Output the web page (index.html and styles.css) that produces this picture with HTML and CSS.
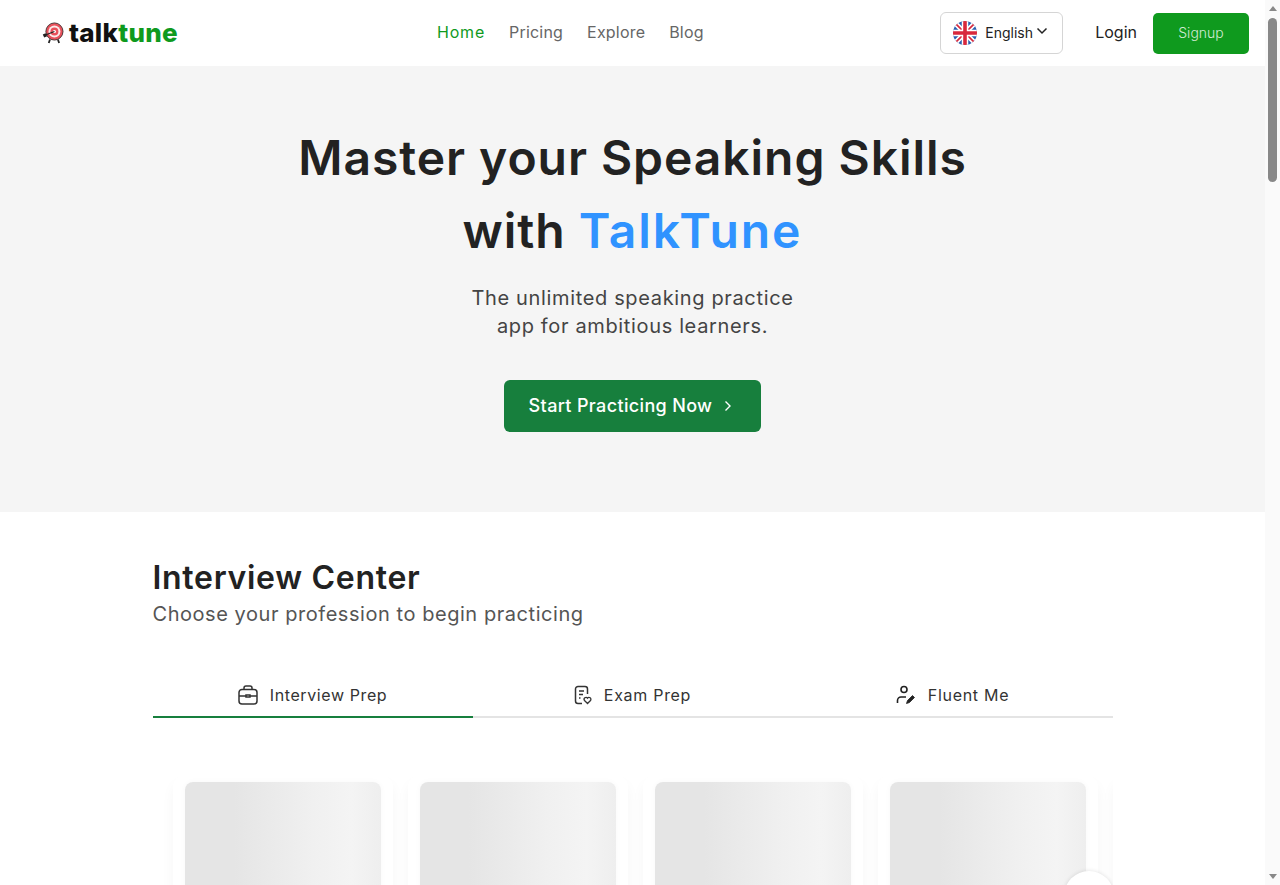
FILE: index.html
```html
<!DOCTYPE html>
<html lang="en">
  <head>
    <meta charset="UTF-8" />
    <meta name="viewport" content="width=device-width, initial-scale=1.0" />
    <title>TalkTune</title>
    <link rel="stylesheet" href="styles.css">
  </head>
  <body>
    <div class="page">
      <div class="content">
        <header class="navbar">
          <a class="logo" href="#">
            <svg class="logo-icon" width="22" height="22" viewBox="0 0 22 22">
              <path d="M8 17.5 L6.8 21 M16 17.5 L17.2 21" stroke="#222" stroke-width="1.8"/>
              <circle cx="12.5" cy="9.5" r="8.6" fill="#e8505b" stroke="#3a2a2a" stroke-width="0.9"/>
              <circle cx="12.5" cy="9.5" r="6" fill="#fbeaea"/>
              <circle cx="12.5" cy="9.5" r="4" fill="#e8505b"/>
              <circle cx="12.5" cy="9.5" r="1.6" fill="#fff"/>
              <path d="M12.5 9.5 L3.5 13" stroke="#222" stroke-width="1.3"/>
              <path d="M0.8 12.6 L3.6 11.2 L5.2 14.2 L2.2 15.4 Z" fill="#222"/>
            </svg>
            <span class="logo-text">talk<span class="logo-green">tune</span></span>
          </a>
          <nav class="nav-links">
            <a class="active" href="#">Home</a>
            <a href="#">Pricing</a>
            <a href="#">Explore</a>
            <a href="#">Blog</a>
          </nav>
          <button class="lang-select">
            <svg class="flag" width="24" height="24" viewBox="0 0 24 24">
              <defs><clipPath id="flagClip"><circle cx="12" cy="12" r="12"/></clipPath></defs>
              <g clip-path="url(#flagClip)">
                <rect width="24" height="24" fill="#2a5fb0"/>
                <path d="M0 0 L24 24 M24 0 L0 24" stroke="#fff" stroke-width="5"/>
                <path d="M0 0 L24 24 M24 0 L0 24" stroke="#d8283c" stroke-width="1.6"/>
                <path d="M12 0 V24 M0 12 H24" stroke="#fff" stroke-width="6.5"/>
                <path d="M12 0 V24 M0 12 H24" stroke="#d8283c" stroke-width="3.6"/>
              </g>
            </svg>
            <span>English</span>
            <svg class="chevron" width="12" height="8" viewBox="0 0 12 8">
              <path d="M1.5 1.5 L6 6 L10.5 1.5" fill="none" stroke="#222" stroke-width="1.5"/>
            </svg>
          </button>
          <a class="login" href="#">Login</a>
          <button class="signup">Signup</button>
        </header>

        <section class="hero">
          <h1>Master your Speaking Skills<br />with <span class="blue">TalkTune</span></h1>
          <p>The unlimited speaking practice<br />app for ambitious learners.</p>
          <button class="cta">
            Start Practicing Now
            <svg width="8" height="12" viewBox="0 0 8 12">
              <path d="M1.5 1.5 L6 6 L1.5 10.5" fill="none" stroke="#fff" stroke-width="1.4"/>
            </svg>
          </button>
        </section>

        <section class="center">
          <h2>Interview Center</h2>
          <p class="sub">Choose your profession to begin practicing</p>

          <div class="tabs">
            <div class="tab selected">
              <svg width="20" height="20" viewBox="0 0 20 20" fill="none" stroke="#333" stroke-width="1.5">
                <rect x="1" y="4.5" width="18" height="14.5" rx="3"/>
                <path d="M6 4.5 V3 A2 2 0 0 1 8 1 H12 A2 2 0 0 1 14 3 V4.5"/>
                <path d="M1 11 H8 M12 11 H19"/>
                <path d="M8 10 H12 V12 H8 Z"/>
              </svg>
              <span>Interview Prep</span>
            </div>
            <div class="tab">
              <svg width="18" height="20" viewBox="0 0 18 20" fill="none" stroke="#333" stroke-width="1.5">
                <path d="M8 18.5 H4 A2.5 2.5 0 0 1 1.5 16 V4 A2.5 2.5 0 0 1 4 1.5 H11 A2.5 2.5 0 0 1 13.5 4 V9"/>
                <path d="M5 6 H10 M5 9.5 H9 M5 13 H6.5"/>
                <path d="M13.5 18.5 L10.5 15.5 A1.8 1.8 0 0 1 13.5 13.2 A1.8 1.8 0 0 1 16.5 15.5 Z" stroke-width="1.3"/>
              </svg>
              <span>Exam Prep</span>
            </div>
            <div class="tab">
              <svg width="20" height="20" viewBox="0 0 20 20" fill="none" stroke="#222" stroke-width="1.6">
                <circle cx="8" cy="4.5" r="3"/>
                <path d="M1.5 18 V15.5 A3.5 3.5 0 0 1 5 12 H10"/>
                <path d="M10.5 18.5 L11.5 15.5 L16.5 10.5 L18.5 12.5 L13.5 17.5 Z" fill="#222" stroke-width="0.8"/>
              </svg>
              <span>Fluent Me</span>
            </div>
          </div>

          <div class="carousel">
            <div class="card"><div class="thumb"></div></div>
            <div class="card"><div class="thumb"></div></div>
            <div class="card"><div class="thumb"></div></div>
            <div class="card"><div class="thumb"></div></div>
            <div class="card"><div class="thumb"></div></div>
            <div class="next-btn"></div>
          </div>
        </section>
      </div>

      <!-- scrollbar -->
      <div class="scrollbar">
        <span class="arrow-up"></span>
        <span class="thumb-bar"></span>
        <span class="arrow-down"></span>
      </div>
    </div>
  </body>
</html>
```

FILE: styles.css
```css
* {
  margin: 0;
  padding: 0;
  box-sizing: border-box;
}

body,
html {
  height: 100%;
  overflow: hidden;
  font-family: Inter, "Open Sans", Arial, sans-serif;
  color: #222;
  background: #fff;
}

a {
  text-decoration: none;
  color: inherit;
}

button {
  font-family: inherit;
  cursor: pointer;
}

.page {
  display: flex;
  height: 885px;
}

.content {
  flex: 1;
  min-width: 0;
  overflow: hidden;
}

/* navbar */
.navbar {
  display: flex;
  align-items: center;
  height: 66px;
  padding: 0 16px 0 42px;
  background: #fff;
}

.logo {
  display: flex;
  align-items: center;
  gap: 5px;
  width: 136px;
}

.logo-text {
  font-size: 26px;
  font-weight: 800;
  line-height: 30px;
  letter-spacing: 0.3px;
  white-space: nowrap;
  color: #111;
}

.logo-green {
  color: #0f9a1e;
}

.nav-links {
  display: flex;
  gap: 24px;
  margin-left: 259px;
  padding-bottom: 2px;
  font-size: 16px;
  letter-spacing: 0.2px;
  color: #666;
}

.nav-links .active {
  letter-spacing: 0.8px;
  color: #0f9a1e;
}

.lang-select {
  display: flex;
  align-items: center;
  gap: 8px;
  width: 123px;
  height: 42px;
  margin-left: auto;
  padding: 0 12px;
  background: #fff;
  border: 1px solid #d5d5d5;
  border-radius: 6px;
  font-size: 14px;
  color: #222;
}

.lang-select span {
  padding-bottom: 1px;
}

.chevron {
  margin-left: -5px;
  margin-top: -4px;
}

.login {
  margin-left: 32px;
  padding-bottom: 2px;
  font-size: 16px;
  color: #222;
}

.signup {
  width: 96px;
  height: 41px;
  margin-left: 16px;
  padding-bottom: 1px;
  background: #0f9a1e;
  border: none;
  border-radius: 5px;
  color: #cfe9d2;
  font-size: 14px;
  font-weight: 300;
}

/* hero */
.hero {
  display: flex;
  flex-direction: column;
  align-items: center;
  height: 446px;
  padding-top: 55px;
  background: #f5f5f5;
  text-align: center;
}

.hero h1 {
  font-size: 48px;
  font-weight: 600;
  line-height: 73px;
  letter-spacing: 0.95px;
  color: #222;
}

.blue {
  letter-spacing: 1.95px;
  color: #3093ff;
}

.hero p {
  margin-top: 17px;
  font-size: 20px;
  line-height: 28px;
  letter-spacing: 0.65px;
  color: #444;
}

.cta {
  display: flex;
  align-items: center;
  justify-content: center;
  gap: 12px;
  width: 257px;
  height: 52px;
  margin-top: 40px;
  padding: 0 4px 1px 0;
  background: #177f3d;
  border: none;
  border-radius: 6px;
  color: #fff;
  font-size: 18px;
  font-weight: 500;
  letter-spacing: 0.35px;
}

/* interview center */
.center {
  width: 960px;
  margin: 0 auto;
  padding-top: 46px;
}

.center h2 {
  font-size: 32px;
  font-weight: 600;
  line-height: 39px;
  letter-spacing: 0.7px;
  color: #222;
}

.sub {
  font-size: 20px;
  line-height: 34px;
  letter-spacing: 0.55px;
  color: #555;
}

.tabs {
  display: grid;
  grid-template-columns: repeat(3, 1fr);
  height: 42px;
  margin-top: 45px;
  border-bottom: 2px solid #e4e4e4;
}

.tab {
  display: flex;
  align-items: center;
  justify-content: center;
  gap: 12px;
  height: 42px;
  padding-bottom: 4px;
  font-size: 16px;
  letter-spacing: 0.7px;
  color: #333;
}

.tab.selected {
  padding-bottom: 2px;
  border-bottom: 2px solid #177f3d;
  letter-spacing: 0.6px;
}

.carousel {
  position: relative;
  display: flex;
  gap: 15px;
  height: 200px;
  margin-top: 57px;
  padding-left: 20px;
  overflow: hidden;
}

.card {
  flex: none;
  width: 220px;
  height: 300px;
  padding: 7px 12px;
  background: #fff;
  border-radius: 12px;
  box-shadow: 0 8px 14px rgba(0, 0, 0, 0.04);
}

.thumb {
  height: 100%;
  background: linear-gradient(90deg, #e5e5e5 25%, #f0f0f0 65%, #f4f4f4 85%, #eeeeee 100%);
  border-radius: 8px;
  box-shadow: 0 0 6px rgba(0, 0, 0, 0.03);
}

.next-btn {
  position: absolute;
  left: 911px;
  top: 96px;
  width: 50px;
  height: 50px;
  background: #fff;
  border-radius: 50%;
  box-shadow: 0 0 4px rgba(0, 0, 0, 0.12);
}

/* scrollbar */
.scrollbar {
  display: flex;
  flex-direction: column;
  align-items: center;
  flex: none;
  width: 15px;
  height: 885px;
  padding-top: 6px;
  background: #fafafa;
}

.arrow-up {
  width: 0;
  height: 0;
  border: 4.5px solid transparent;
  border-top: 0;
  border-bottom: 5px solid #888;
}

.thumb-bar {
  width: 9px;
  height: 164px;
  margin-top: 7px;
  background: #888;
  border-radius: 5px;
}

.arrow-down {
  width: 0;
  height: 0;
  margin-top: auto;
  margin-bottom: 6px;
  border: 4.5px solid transparent;
  border-bottom: 0;
  border-top: 5px solid #888;
}
```
